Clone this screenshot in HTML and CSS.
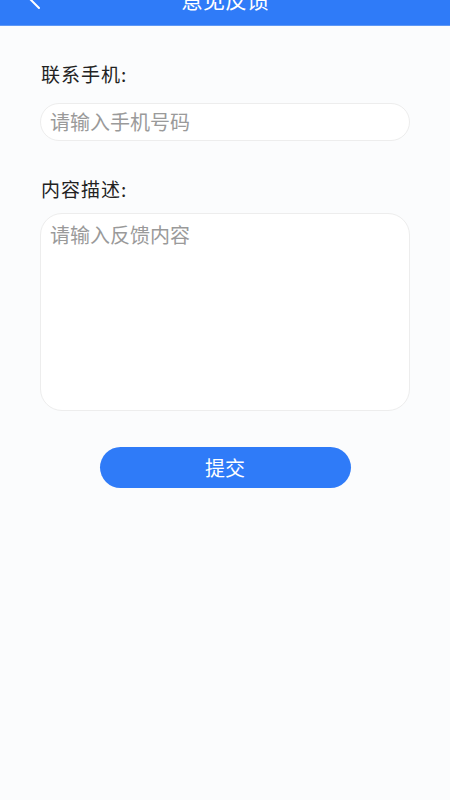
FILE: index.html
```html
<!DOCTYPE html>
<html lang="zh">
<head>
<meta charset="utf-8">
<link rel="stylesheet" href="styles.css">
</head>
<body>
<header class="topbar">
  <svg class="back" width="14" height="24" viewBox="0 0 14 24"><path d="M12 2 L2 12 L12 22" fill="none" stroke="#fff" stroke-width="2" stroke-linecap="round" stroke-linejoin="round"/></svg>
  <h1 class="title">意见反馈</h1>
</header>
<main class="form">
  <label class="label">联系手机:</label>
  <div class="input">请输入手机号码</div>
  <label class="label label2">内容描述:</label>
  <div class="textarea">请输入反馈内容</div>
  <div class="actions"><button class="submit">提交</button></div>
</main>
</body>
</html>
```
FILE: styles.css
```css
* { box-sizing: border-box; }
html, body { margin: 0; padding: 0; }
body {
  width: 450px;
  height: 800px;
  background: #fbfcfd;
  font-family: "Noto Sans CJK SC", "Noto Sans", sans-serif;
  overflow: hidden;
}
.topbar {
  height: 56px;
  margin-top: -30px;
  background: #2f7bf8;
  border-bottom: 1px solid #5e98f5;
  display: flex;
  align-items: center;
  justify-content: center;
  position: relative;
}
.back {
  position: absolute;
  left: 27px;
  top: 16px;
}
.title {
  margin: 0;
  color: #fff;
  font-size: 22px;
  font-weight: normal;
  line-height: 56px;
}
.form {
  padding: 35px 40px 0 40px;
  display: flex;
  flex-direction: column;
}
.label {
  font-size: 19px;
  color: #222;
  line-height: 26px;
  padding-left: 1px;
  letter-spacing: 1px;
}
.input {
  margin-top: 16px;
  height: 38px;
  border: 1px solid #ededed;
  border-radius: 19px;
  background: #fff;
  font-size: 20px;
  color: #9a9a9a;
  line-height: 36px;
  padding-left: 9px;
}
.label2 { margin-top: 35px; }
.textarea {
  margin-top: 11px;
  height: 198px;
  border: 1px solid #ededed;
  border-radius: 22px;
  background: #fff;
  font-size: 20px;
  color: #9a9a9a;
  line-height: 26px;
  padding: 8px 9px;
}
.actions {
  margin-top: 36px;
  display: flex;
  justify-content: center;
}
.submit {
  width: 251px;
  height: 41px;
  border: none;
  border-radius: 21px;
  background: #2f7bf8;
  color: #fff;
  font-family: inherit;
  font-size: 20px;
  padding: 0;
}
```
